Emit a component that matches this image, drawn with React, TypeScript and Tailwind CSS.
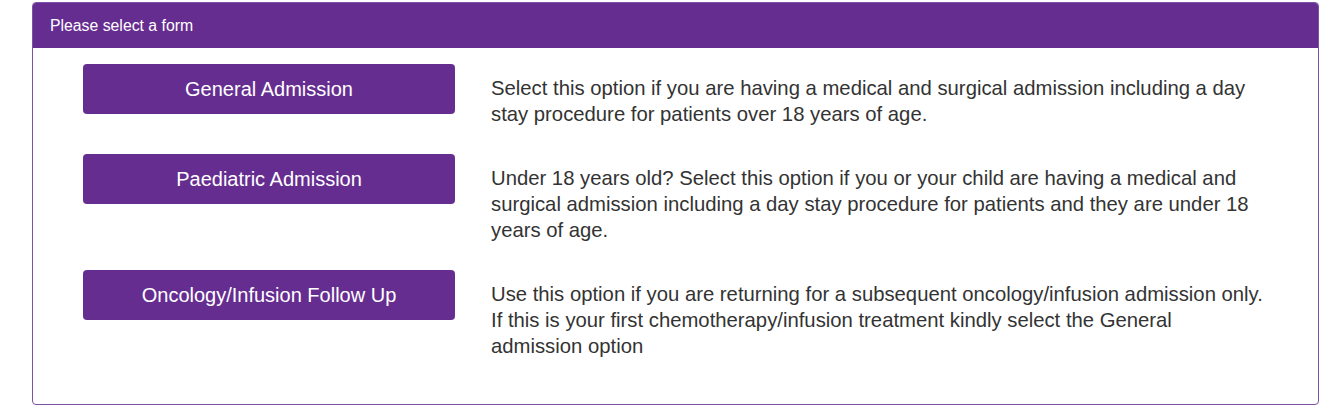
const options = [
  {
    label: 'General Admission',
    text: 'Select this option if you are having a medical and surgical admission including a day stay procedure for patients over 18 years of age.',
  },
  {
    label: 'Paediatric Admission',
    text: 'Under 18 years old? Select this option if you or your child are having a medical and surgical admission including a day stay procedure for patients and they are under 18 years of age.',
  },
  {
    label: 'Oncology/Infusion Follow Up',
    text: 'Use this option if you are returning for a subsequent oncology/infusion admission only. If this is your first chemotherapy/infusion treatment kindly select the General admission option',
  },
];

export default function App() {
  return (
    <div className="w-full h-[418px] bg-white pt-[2px] pl-[32px] pr-[15px]" style={{ fontFamily: '"Liberation Sans", Arial, sans-serif' }}>
      {/* PANEL */}
      <div className="border border-[#7d52a6] rounded-[4px] overflow-hidden">
        <div className="h-[45px] bg-[#662d91] flex items-center pl-[17px] text-white text-[15.8px]">
          Please select a form
        </div>
        <div className="pt-[16px] pb-[45px] pl-[50px] flex flex-col gap-[27px]">
          {options.map((o) => (
            <div key={o.label} className="flex gap-[36px]">
              <button className="w-[372px] h-[50px] shrink-0 rounded-[4px] bg-[#662d91] text-white text-[20px]">
                {o.label}
              </button>
              <p className="pt-[11px] w-[775px] text-[20.3px] leading-[26px] text-[#333333]">{o.text}</p>
            </div>
          ))}
        </div>
      </div>
    </div>
  );
}
